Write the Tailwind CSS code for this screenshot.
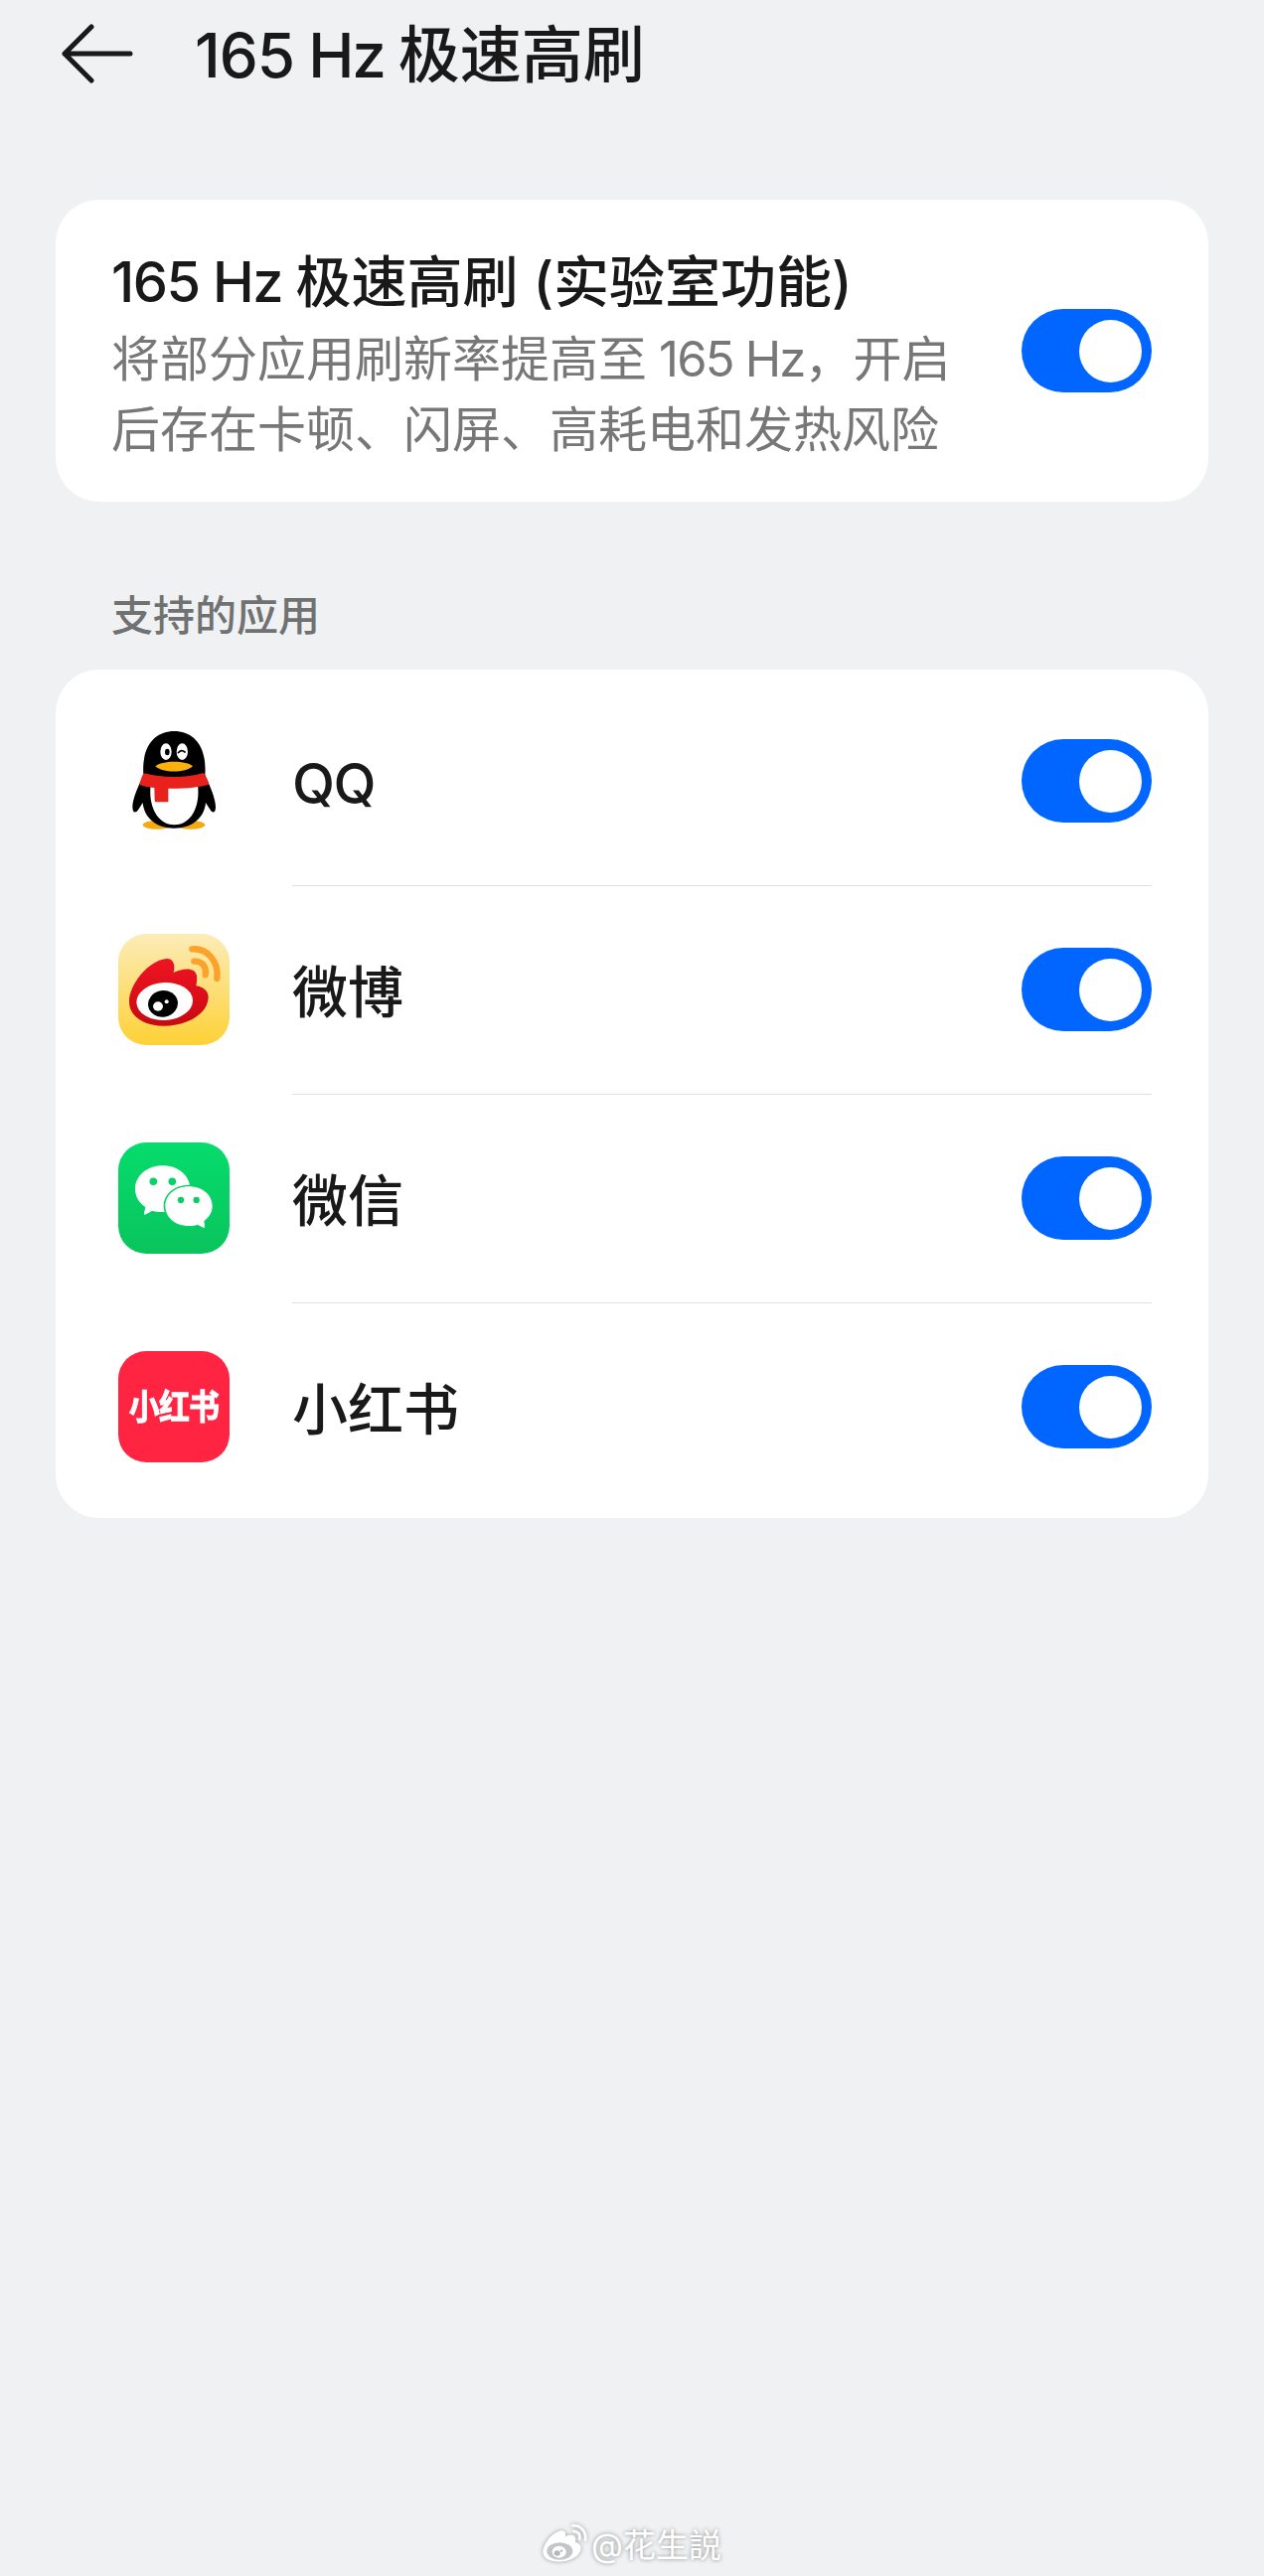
<!DOCTYPE html>
<html lang="zh-CN">
<head>
  <meta charset="UTF-8" />
  <meta name="viewport" content="width=device-width, initial-scale=1.0"/>
  <title>165 Hz 极速高刷</title>
  <script src="https://cdn.jsdelivr.net/npm/@tailwindcss/browser@4"></script>
  <style>
    body {
      font-family: 'Inter', 'Noto Sans CJK SC', sans-serif;
    }
  </style>
</head>
<body class="bg-[#eff1f3] text-[#191919]">
  <div class="flex flex-col w-[1272px] h-[2593px] overflow-hidden">
    <!-- Header -->
    <header class="flex items-center h-[108px] pl-[61px] shrink-0">
      <svg class="w-[73px] h-[60px] shrink-0" viewBox="0 0 73 60" fill="none" stroke="#191919" stroke-width="5" stroke-linecap="round" stroke-linejoin="round">
        <path d="M31 3L4 30L31 57M4 30H70" />
      </svg>
      <h1 class="ml-[62px] pt-[4px] text-[62px] leading-[104px] font-medium whitespace-nowrap"><span class="tracking-[-1px]">165</span><span class="tracking-[-2.3px]"> Hz </span>极速高刷</h1>
    </header>

    <main class="px-[56px] pt-[93px] flex-1">
      <section class="flex items-center justify-between h-[304px] bg-white rounded-[44px] pl-[56px] pr-[57px]">
        <div class="pt-[5px] whitespace-nowrap">
          <h2 class="text-[56px] leading-[80px] font-medium"><span class="tracking-[-1.5px]">165 Hz </span>极速高刷<span> (</span>实验室功能)</h2>
          <p class="pt-[2px] text-[49px] leading-[71px] text-[#777777]">将部分应用刷新率提高至<span class="tracking-[-1.8px]"> 165 Hz</span>，开启<br>后存在卡顿、闪屏、高耗电和发热风险</p>
        </div>
        <div class="flex items-center justify-end w-[131px] h-[84px] pr-[10px] rounded-full bg-[#0066ff] shrink-0">
          <div class="size-[63px] rounded-full bg-white"></div>
        </div>
      </section>

      <h3 class="mt-[85px] pl-[56px] text-[42px] leading-[60px] font-medium text-[#707272]">支持的应用</h3>

      <ul class="mt-[24px] bg-white rounded-[44px] py-[7px] pl-[63px] pr-[57px]">
        <!-- QQ -->
        <li class="flex items-center h-[210px]">
          <svg class="size-[112px] shrink-0" viewBox="27 30 336 336">
            <ellipse cx="144" cy="331" rx="43" ry="13" fill="#f5ab10" />
            <ellipse cx="246" cy="331" rx="43" ry="13" fill="#f5ab10" />
            <path d="M103 180C97 90 140 48 196 48C252 48 295 90 289 180C302 210 321 250 321 277C321 296 312 296 305 286L291 264C287 308 252 341 196 341C140 341 105 308 101 264L87 286C80 296 70 296 70 277C70 250 90 210 103 180Z" fill="#000" />
            <path d="M125 210H267C275 275 247 331 196 331C146 331 117 275 125 210Z" fill="#fff" />
            <path d="M104 175C160 190 235 190 284 174C292 184 298 197 301 209C275 217 225 222 178 221V262H142Q137 262 137 257L136 219Q112 217 91 210C94 197 98 185 104 175Z" fill="#e8211d" />
            <path d="M139 154C158 136 234 136 252 154C230 175 160 175 139 154Z" fill="#fcb00d" />
            <ellipse cx="171" cy="110" rx="17" ry="25" fill="#fff" />
            <ellipse cx="220" cy="110" rx="17" ry="25" fill="#fff" />
            <ellipse cx="175" cy="111" rx="7" ry="10" fill="#000" />
            <path d="M208 113Q217 102 228 111" fill="none" stroke="#000" stroke-width="5" stroke-linecap="round" />
          </svg>
          <div class="flex items-center justify-between flex-1 h-[212px] pt-px ml-[63px] border-b border-[#dedfe0]">
            <span class="pt-[5px] text-[56px] leading-[80px] font-medium tracking-[-1.5px]">QQ</span>
            <div class="flex items-center justify-end w-[131px] h-[84px] pr-[10px] rounded-full bg-[#0066ff]">
              <div class="size-[63px] rounded-full bg-white"></div>
            </div>
          </div>
        </li>
        <!-- Weibo -->
        <li class="flex items-center h-[210px]">
          <svg class="size-[112px] shrink-0" viewBox="27 30 336 336">
            <defs>
              <linearGradient id="weibo-bg" x1="0" y1="0" x2="0" y2="1">
                <stop offset="0" stop-color="#fcecb8" />
                <stop offset="1" stop-color="#fed136" />
              </linearGradient>
              <linearGradient id="weibo-body" x1="0" y1="0" x2="0" y2="1">
                <stop offset="0" stop-color="#f01422" />
                <stop offset="1" stop-color="#c80a12" />
              </linearGradient>
            </defs>
            <rect x="27" y="30" width="336" height="336" rx="84" fill="url(#weibo-bg)" />
            <path d="M60 235C60 185 115 112 172 105C193 104 200 122 194 147C225 132 260 131 264 157C265 168 264 178 262 187C285 191 299 203 299 222C297 275 230 308 165 308C105 308 60 280 60 235Z" fill="url(#weibo-body)" />
            <ellipse cx="167" cy="234" rx="85" ry="57" fill="#fff" transform="rotate(-3 167 234)" />
            <ellipse cx="162" cy="241" rx="45" ry="40" fill="#000" transform="rotate(-10 162 241)" />
            <ellipse cx="147" cy="249" rx="15" ry="14" fill="#fff" />
            <circle cx="173" cy="235" r="6" fill="#fff" />
            <path d="M250 76C294 72 332 112 325 165M256 113C280 112 294 128 290 154" fill="none" stroke="#fba22a" stroke-width="19" stroke-linecap="round" />
          </svg>
          <div class="flex items-center justify-between flex-1 h-[212px] pt-px ml-[63px] border-b border-[#dedfe0]">
            <span class="pt-[5px] text-[56px] leading-[80px] font-medium">微博</span>
            <div class="flex items-center justify-end w-[131px] h-[84px] pr-[10px] rounded-full bg-[#0066ff]">
              <div class="size-[63px] rounded-full bg-white"></div>
            </div>
          </div>
        </li>
        <!-- WeChat -->
        <li class="flex items-center h-[210px]">
          <svg class="size-[112px] shrink-0" viewBox="27 30 336 336">
            <defs>
              <linearGradient id="wechat-bg" x1="0" y1="0" x2="0" y2="1">
                <stop offset="0" stop-color="#06dc6c" />
                <stop offset="1" stop-color="#09c45c" />
              </linearGradient>
            </defs>
            <rect x="27" y="30" width="336" height="336" rx="84" fill="url(#wechat-bg)" />
            <path d="M161 100C209 100 244 131 244 170C244 209 209 240 161 240C150 240 139 239 130 236L108 248Q104 249 105 244L109 225C90 213 78 193 78 170C78 131 114 100 161 100Z" fill="#fff" />
            <path d="M240 163C281 163 311 189 311 222C311 241 301 256 286 267L288 283Q289 289 284 287L266 278C258 281 249 282 240 282C199 282 169 256 169 222C169 189 199 163 240 163Z" fill="#fff" stroke="#07d065" stroke-width="10" paint-order="stroke" />
            <circle cx="133" cy="148" r="11.500" fill="#07d468" />
            <circle cx="190" cy="148" r="11.500" fill="#07d468" />
            <circle cx="216" cy="204" r="9.500" fill="#07cf64" />
            <circle cx="263" cy="204" r="9.500" fill="#07cf64" />
          </svg>
          <div class="flex items-center justify-between flex-1 h-[212px] pt-px ml-[63px] border-b border-[#dedfe0]">
            <span class="pt-[5px] text-[56px] leading-[80px] font-medium">微信</span>
            <div class="flex items-center justify-end w-[131px] h-[84px] pr-[10px] rounded-full bg-[#0066ff]">
              <div class="size-[63px] rounded-full bg-white"></div>
            </div>
          </div>
        </li>
        <!-- Xiaohongshu -->
        <li class="flex items-center h-[210px]">
          <div class="flex items-center justify-center size-[112px] rounded-[28px] bg-[#ff2442] shrink-0">
            <span class="text-[31px] leading-[40px] font-bold tracking-[-0.8px] text-white scale-y-115 [-webkit-text-stroke:0.8px_white]">小红书</span>
          </div>
          <div class="flex items-center justify-between flex-1 h-[210px] ml-[63px]">
            <span class="pt-[5px] text-[56px] leading-[80px] font-medium">小红书</span>
            <div class="flex items-center justify-end w-[131px] h-[84px] pr-[10px] rounded-full bg-[#0066ff]">
              <div class="size-[63px] rounded-full bg-white"></div>
            </div>
          </div>
        </li>
      </ul>
    </main>

    <!-- Watermark -->
    <footer class="flex items-center justify-center h-[64px] pr-[3px] text-white shrink-0">
      <svg class="w-[50px] h-[44px] drop-shadow-[0_0_2px_#999999]" viewBox="0 0 150 132">
        <path d="M10 90C10 65 40 28 66 25C76 25 80 32 78 42C92 36 108 36 109 50L108 60C120 63 126 70 125 79C122 104 90 119 60 119C32 119 10 110 10 90Z" fill="#fff" />
        <ellipse cx="61" cy="87" rx="39" ry="26" fill="#c4c5c6" />
        <ellipse cx="59" cy="89" rx="21" ry="18" fill="#fff" />
        <ellipse cx="53" cy="93" rx="9" ry="8" fill="#b4b5b6" />
        <circle cx="66" cy="86" r="3.500" fill="#b4b5b6" />
        <path d="M100 10C124 8 142 28 138 54M103 27C116 27 124 36 121 50" fill="none" stroke="#fff" stroke-width="8" stroke-linecap="round" />
      </svg>
      <span class="ml-[2px] pt-px text-[33px] leading-[44px] [text-shadow:0_0_4px_#888888]">@花生説</span>
    </footer>
  </div>
</body>
</html>
